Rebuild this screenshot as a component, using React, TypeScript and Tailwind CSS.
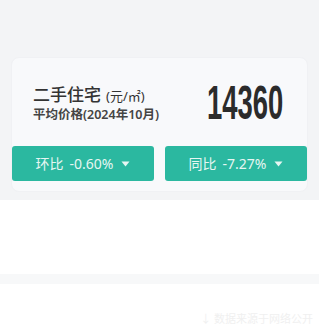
import React from 'react';

function Stat({ label, value }: { label: string; value: string }) {
  return (
    <div className="flex h-[35px] flex-1 items-center justify-center gap-[6px] rounded-[3px] bg-[#2bb8a0] text-[14px] text-[#e6f6f2]">
      <span>{label}</span>
      <span>{value}</span>
      <svg width="9" height="6" viewBox="0 0 9 6" className="ml-[2px]">
        <path d="M0.5 0.5h8L4.5 5.5z" fill="#e6f6f2" />
      </svg>
    </div>
  );
}

export default function App() {
  return (
    <div
      className="flex h-[331px] w-[319px] flex-col overflow-hidden bg-white"
      style={{ fontFamily: '"Noto Sans", "Noto Sans CJK SC", sans-serif' }}
    >
      <div className="bg-[#f3f4f6] px-[11px] pt-[57px] pb-[8px]">
        <div className="rounded-[8px] border border-[#f0f1f4] bg-[#f8f9fb]">
          <div className="flex h-[88px] items-center justify-between pl-[21px] pr-[22px]">
            <div className="flex flex-col pt-[4px]">
              <div className="flex items-baseline leading-[20px] text-[#333]">
                <span className="text-[17px] font-medium">二手住宅</span>
                <span className="ml-[5px] text-[13px]">(元/㎡)</span>
              </div>
              <div className="text-[12.5px] font-semibold leading-[17px] text-[#444]">平均价格(2024年10月)</div>
            </div>
            <div className="flex w-[80px] justify-center">
              <span
                className="inline-block scale-x-[0.56] text-[49px] font-bold leading-none text-[#2b2b2b]"
                style={{ fontFamily: '"Liberation Sans", sans-serif' }}
              >
                14360
              </span>
            </div>
          </div>
          <div className="flex gap-[11px] pb-[10px]">
            <Stat label="环比" value="-0.60%" />
            <Stat label="同比" value="-7.27%" />
          </div>
        </div>
      </div>
      <div className="h-[74px]" />
      <div className="h-[10px] bg-[#f7f8f9]" />
      <div className="flex flex-1 items-end justify-end pb-[4px] pr-[6px]">
        <span className="text-[11px] text-[#f0f0f0]">↓ 数据来源于网络公开</span>
      </div>
    </div>
  );
}
